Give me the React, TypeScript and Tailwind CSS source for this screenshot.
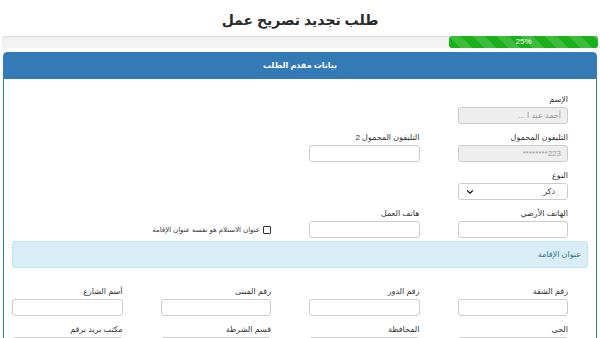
import { ChevronDown } from "lucide-react";

const font = { fontFamily: '"Liberation Sans", "DejaVu Sans", sans-serif' };

function Field(props: { label: string; value?: string; disabled?: boolean; ltr?: boolean }) {
  const { label, value, disabled, ltr } = props;
  return (
    <div className="flex flex-col">
      <label className="h-[12px] text-[8px] leading-[12px] text-[#333]">{label}</label>
      <div
        className={`mt-[1px] flex h-[17px] items-center rounded-[3px] border border-[#ccc] px-[6px] text-[8px] text-[#999] ${
          disabled ? "bg-[#eee]" : "bg-white"
        }`}
      >
        {ltr ? (
          <span dir="ltr" className="w-full text-right">
            {value}
          </span>
        ) : (
          value
        )}
      </div>
    </div>
  );
}

export default function App() {
  return (
    <div dir="rtl" className="min-h-[338px] overflow-hidden bg-white" style={font}>
      <h1 className="pt-[9px] text-center text-[14px] font-bold leading-[22px] text-[#2a2a2a]">
        طلب تجديد تصريح عمل
      </h1>
      <div className="mx-[2px] mt-[5px] h-[12px] rounded-[3px] bg-[#f3f3f3] shadow-[inset_0_1px_2px_rgba(0,0,0,0.1)]">
        <div className="h-full w-[25%] rounded-[3px] bg-[#19b019] bg-[linear-gradient(45deg,rgba(255,255,255,0.15)_25%,transparent_25%,transparent_50%,rgba(255,255,255,0.15)_50%,rgba(255,255,255,0.15)_75%,transparent_75%,transparent)] bg-[length:24px_24px] text-center text-[8px] leading-[12px] text-white">
          25%
        </div>
      </div>
      <div className="mx-[3px] mt-[4px] rounded-t-[4px] border border-[#337ab7]">
        <div className="flex h-[26px] items-center justify-center bg-[#337ab7] text-[8px] font-bold text-white">
          بيانات مقدم الطلب
        </div>
        <div className="px-[8px] pt-[15px]">
          <div className="mr-[20px] grid grid-cols-4 gap-x-[38px] gap-y-[8px]">
            <Field label="الإسم" value="أحمد عبد ا ..." disabled />
            <div />
            <div />
            <div />
            <Field label="التليفون المحمول" value="********223" disabled ltr />
            <Field label="التليفون المحمول 2" />
            <div />
            <div />
            <div className="flex flex-col">
              <label className="h-[12px] text-[8px] leading-[12px] text-[#333]">النوع</label>
              <div className="mt-[1px] flex h-[17px] items-center justify-between rounded-[3px] border border-[#ccc] bg-white px-[6px] text-[8px] text-[#333]">
                <span className="mr-[6px]">ذكر</span>
                <ChevronDown size={10} strokeWidth={3} className="text-[#222]" />
              </div>
            </div>
            <div />
            <div />
            <div />
            <Field label="الهاتف الأرضي" />
            <Field label="هاتف العمل" />
            <div className="flex items-end pb-[3px]">
              <label className="flex items-center gap-[3px] whitespace-nowrap text-[7px] text-[#333]">
                <span className="inline-block h-[8px] w-[8px] shrink-0 rounded-[1px] border border-[#333] bg-white" />
                عنوان الاستلام هو نفسه عنوان الإقامة
              </label>
            </div>
            <div />
          </div>
          <div className="mt-[3px] flex h-[27px] items-center rounded-[3px] border border-[#bce8f1] bg-[#d9edf7] px-[6px] text-[8px] text-[#31708f]">
            عنوان الإقامة
          </div>
          <div className="mr-[20px] mt-[18px] grid grid-cols-4 gap-x-[38px] gap-y-[8px]">
            <Field label="رقم الشقة" />
            <Field label="رقم الدور" />
            <Field label="رقم المبنى" />
            <Field label="أسم الشارع" />
            <Field label="الحى" />
            <Field label="المحافظة" />
            <Field label="قسم الشرطة" />
            <Field label="مكتب بريد برقم" />
          </div>
        </div>
      </div>
    </div>
  );
}
